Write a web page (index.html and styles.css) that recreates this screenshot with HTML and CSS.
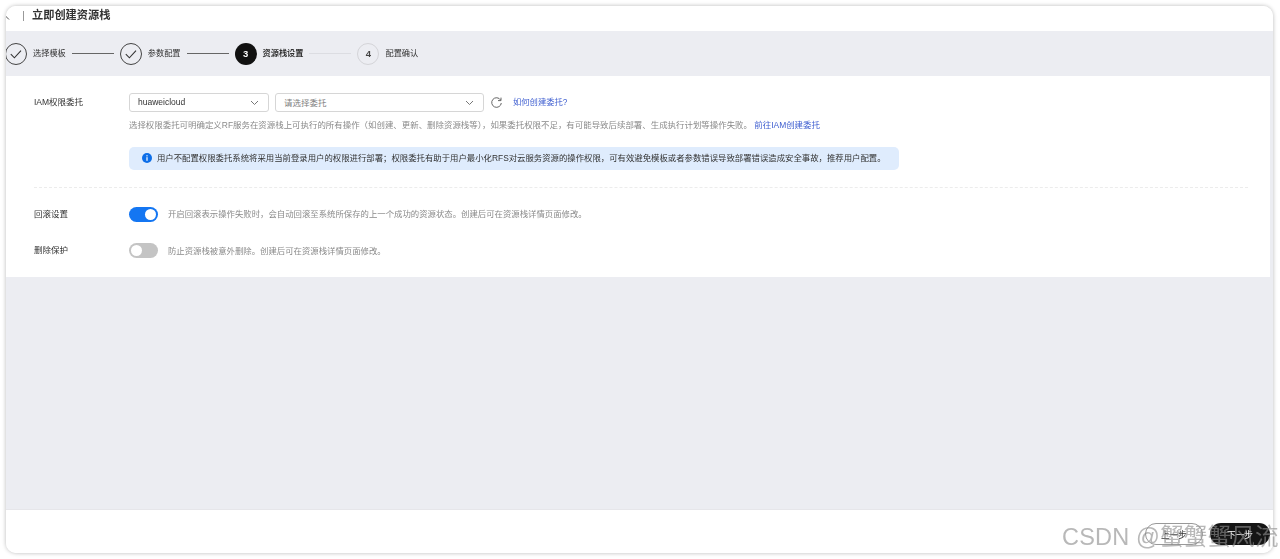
FILE: index.html
```html
<!DOCTYPE html>
<html lang="zh-CN">
<head>
<meta charset="utf-8">
<title>立即创建资源栈</title>
<link rel="stylesheet" href="styles.css">
</head>
<body>
<div class="window">
  <header class="topbar">
    <svg class="back" width="6" height="10" viewBox="0 0 6 10"><path d="M-2 3.5 3 8.5" fill="none" stroke="#555" stroke-width="1"/></svg>
    <span class="sep"></span>
    <h1 class="title">立即创建资源栈</h1>
  </header>
  <main class="body">
    <nav class="steps">
      <span class="circle done"><svg width="14" height="14" viewBox="0 0 14 14"><path d="M1.8 7.2 5.4 10.8 12 3.6" fill="none" stroke="#333" stroke-width="1.1"/></svg></span>
      <span class="step-label">选择模板</span><span class="line"></span>
      <span class="circle done"><svg width="14" height="14" viewBox="0 0 14 14"><path d="M1.8 7.2 5.4 10.8 12 3.6" fill="none" stroke="#333" stroke-width="1.1"/></svg></span>
      <span class="step-label">参数配置</span><span class="line"></span>
      <span class="circle active">3</span>
      <span class="step-label strong">资源栈设置</span><span class="line pending"></span>
      <span class="circle todo">4</span>
      <span class="step-label">配置确认</span>
    </nav>
    <section class="panel">
      <div class="row-iam">
        <div class="field-label iam-label">IAM权限委托</div>
        <div class="field-main">
          <div class="controls">
            <div class="select first"><span class="select-text">huaweicloud</span><svg width="9" height="6" viewBox="0 0 9 6"><path d="M1 1 4.5 4.5 8 1" fill="none" stroke="#777" stroke-width="1"/></svg></div>
            <div class="select second"><span class="select-text placeholder">请选择委托</span><svg width="9" height="6" viewBox="0 0 9 6"><path d="M1 1 4.5 4.5 8 1" fill="none" stroke="#777" stroke-width="1"/></svg></div>
            <svg class="refresh" width="11" height="11" viewBox="0 0 11 11"><path d="M9.6 3A4.8 4.8 0 1 0 10.3 6" fill="none" stroke="#666" stroke-width="1"/><path d="M10 .6v3H7" fill="none" stroke="#666" stroke-width="1"/></svg>
            <a class="link how">如何创建委托?</a>
          </div>
          <p class="hint">选择权限委托可明确定义RF服务在资源栈上可执行的所有操作（如创建、更新、删除资源栈等），如果委托权限不足，有可能导致后续部署、生成执行计划等操作失败。 <a class="link">前往IAM创建委托</a></p>
          <div class="alert">
            <svg width="10" height="10" viewBox="0 0 10 10"><circle cx="5" cy="5" r="5" fill="#0d6ee8"/><rect x="4.4" y="4.2" width="1.2" height="3.6" fill="#fff"/><rect x="4.4" y="2.2" width="1.2" height="1.2" fill="#fff"/></svg>
            <span>用户不配置权限委托系统将采用当前登录用户的权限进行部署；权限委托有助于用户最小化RFS对云服务资源的操作权限，可有效避免模板或者参数错误导致部署错误造成安全事故，推荐用户配置。</span>
          </div>
        </div>
      </div>
      <div class="divider"></div>
      <div class="row-toggle">
        <div class="field-label toggle-label">回滚设置</div>
        <span class="switch on"><i></i></span>
        <span class="hint-inline">开启回滚表示操作失败时，会自动回滚至系统所保存的上一个成功的资源状态。创建后可在资源栈详情页面修改。</span>
      </div>
      <div class="row-toggle second-toggle">
        <div class="field-label toggle-label">删除保护</div>
        <span class="switch"><i></i></span>
        <span class="hint-inline lower">防止资源栈被意外删除。创建后可在资源栈详情页面修改。</span>
      </div>
    </section>
  </main>
  <footer class="footer">
    <button class="btn ghost">上一步</button>
    <button class="btn solid">下一步</button>
  </footer>
</div>
<div class="watermark">CSDN @蟹蟹蟹风流</div>
</body>
</html>
```
FILE: styles.css
```css
* { box-sizing: border-box; }
html, body { margin: 0; padding: 0; background: #fff; }
body {
  width: 1280px;
  height: 559px;
  overflow: hidden;
  position: relative;
  font-family: "Liberation Sans", "Noto Sans CJK SC", sans-serif;
  color: #333;
}
.window {
  margin: 6px 0 0 6px;
  width: 1267px;
  height: 547px;
  border-radius: 10px;
  overflow: hidden;
  background: #fff;
  box-shadow: 0 0 4px rgba(0,0,0,.28);
  display: flex;
  flex-direction: column;
  filter: blur(.45px);
}
.topbar {
  height: 25px;
  flex: none;
  display: flex;
  align-items: flex-start;
  background: #fff;
}
.back { flex: none; margin-top: 5px; }
.sep { width: 1px; height: 10px; background: #999; margin: 5px 0 0 11px; }
.title { margin: 0 0 0 8px; font-size: 11.2px; line-height: 18px; font-weight: 700; color: #333; }
.body {
  flex: 1;
  background: #ecedf2;
  display: flex;
  flex-direction: column;
  min-height: 0;
}
.steps {
  height: 45px;
  flex: none;
  display: flex;
  align-items: center;
  margin-left: -1px;
}
.circle {
  width: 22px;
  height: 22px;
  border-radius: 50%;
  display: flex;
  align-items: center;
  justify-content: center;
  flex: none;
  font-size: 9.5px;
  font-weight: 700;
}
.circle.done { border: 1px solid #444; }
.circle.active { background: #111; color: #fff; }
.circle.todo { border: 1px solid #d4d4d8; color: #444; }
.step-label { font-size: 8.2px; line-height: 12px; margin-left: 6px; color: #333; white-space: nowrap; }
.step-label.strong { font-weight: 700; color: #333; }
.line { width: 42px; height: 1px; background: #666; margin: 0 6px; flex: none; }
.line.pending { background: #dcdde2; }
.panel {
  background: #fff;
  height: 201px;
  margin-right: 3px;
  padding: 17px 22px 0 28px;
  flex: none;
}
.row-iam { display: flex; }
.field-label { width: 95px; flex: none; font-size: 8.5px; line-height: 19px; color: #333; }
.toggle-label { line-height: 17px; margin-bottom: 1px; }
.field-main { flex: 1; min-width: 0; }
.controls { display: flex; align-items: center; height: 19px; }
.select {
  height: 19px;
  border: 1px solid #d6d6d6;
  border-radius: 3px;
  display: flex;
  align-items: center;
  justify-content: space-between;
  font-size: 8.5px;
  background: #fff;
  padding: 0 9px 0 8px;
}
.select-text { margin-bottom: 2px; }
.select.first { width: 140px; }
.select.second { width: 209px; margin-left: 6px; }
.placeholder { color: #808080; }
.refresh { margin-left: 7px; flex: none; }
.how { margin-left: 11px; font-size: 8.3px; margin-bottom: 3px; }
.link { color: #3f5fd0; }
.hint {
  margin: 7px 0 0;
  font-size: 8.45px;
  line-height: 12px;
  color: #8a8a8a;
  white-space: nowrap;
}
.alert {
  margin-top: 16px;
  width: 770px;
  height: 23px;
  background: #dfecfd;
  border-radius: 5px;
  display: flex;
  align-items: center;
  padding-left: 13px;
  font-size: 8.4px;
  line-height: 21px;
  padding-bottom: 1px;
  color: #333;
  white-space: nowrap;
}
.alert svg { flex: none; margin-right: 5px; }
.divider {
  margin-top: 17px;
  border-top: 1px dashed #ececec;
}
.row-toggle { display: flex; align-items: center; height: 15px; margin-top: 19px; }
.second-toggle { margin-top: 21px; }
.switch {
  width: 29px;
  height: 15px;
  border-radius: 8px;
  background: #c4c4c4;
  flex: none;
  display: flex;
  align-items: center;
  padding: 0 2px;
}
.switch i { width: 11px; height: 11px; border-radius: 50%; background: #fff; display: block; }
.switch.on { background: #1476f2; justify-content: flex-end; }
.hint-inline { margin-left: 10px; font-size: 8.4px; line-height: 13px; margin-bottom: 1px; color: #8a8a8a; white-space: nowrap; }
.hint-inline.lower { margin-bottom: 0; margin-top: 1px; }
.footer {
  height: 44px;
  flex: none;
  background: #fff;
  border-top: 1px solid #e6e6ea;
  display: flex;
  align-items: flex-start;
  justify-content: flex-end;
  gap: 7px;
  padding: 13px 3px 0 0;
}
.btn {
  width: 58px;
  height: 22px;
  border-radius: 11px;
  font: 8.6px "Liberation Sans", "Noto Sans CJK SC", sans-serif;
  padding: 0;
}
.btn.ghost { background: #fff; border: 1px solid #999; color: #333; }
.btn.solid { width: 60px; background: #151515; border: 0; color: #fff; }
.watermark {
  position: absolute;
  left: 1062px;
  top: 522px;
  font-size: 23.5px;
  line-height: 30px;
  letter-spacing: .2px;
  color: rgba(140,140,140,.62);
  white-space: nowrap;
  font-family: "Liberation Sans", "Noto Sans CJK SC", sans-serif;
}
```
